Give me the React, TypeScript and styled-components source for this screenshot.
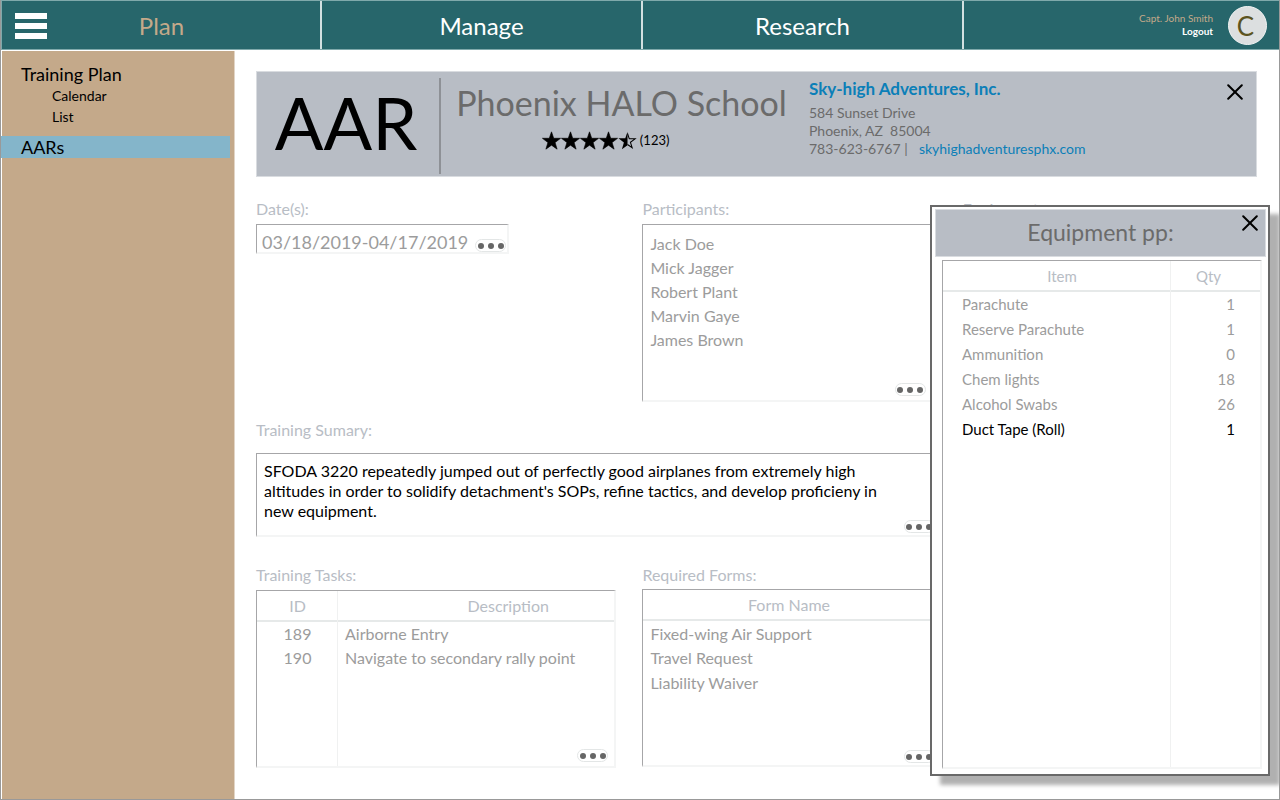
import React from "react";
import styled, { createGlobalStyle } from "styled-components";

const GlobalStyle = createGlobalStyle`
  *, *::before, *::after { box-sizing: border-box; }
  body { margin: 0; background: #fff; }
  body, button, input, textarea, table { font-family: Lato, "Liberation Sans", sans-serif; }
  button { border: 0; padding: 0; background: none; cursor: pointer; }
  a { color: inherit; text-decoration: none; }
  ul { list-style: none; margin: 0; padding: 0; }
  h1, h2, p { margin: 0; font-weight: 400; }
`;

const Page = styled.div`
  position: relative;
  display: flex;
  flex-direction: column;
  min-height: 100vh;
  overflow: hidden;
  border: 1px solid #999;
  border-top: 0;
`;

const Header = styled.header`
  display: grid;
  grid-template-columns: 320fr 321fr 321fr 315fr;
  height: 50px;
  border: 1px solid #7fa9ab;
  border-right: 0;
  background: #27666b;
`;

const NavCell = styled.div`
  display: flex;
  align-items: center;
  border-right: 2px solid #d3e0e1;
`;

const NavLink = styled.a<{ $active?: boolean }>`
  flex: 1;
  text-align: center;
  font-size: 24px;
  line-height: 32px;
  padding-top: 2px;
  color: ${(p) => (p.$active ? "#c4a98a" : "#fff")};
`;

const MenuButton = styled.button`
  display: flex;
  flex-direction: column;
  gap: 4px;
  width: 32px;
  margin: 2px -44px 0 13px;
`;

const MenuBar = styled.span`
  height: 6px;
  background: #fff;
`;

const Account = styled.div`
  display: flex;
  align-items: center;
  justify-content: flex-end;
  gap: 15px;
  padding-right: 12px;
`;

const AccountText = styled.div`
  display: flex;
  flex-direction: column;
  align-items: flex-end;
  font-size: 10px;
  line-height: 13px;
  color: #c4a98a;
`;

const Logout = styled.a`
  font-weight: 700;
  color: #fff;
`;

const Avatar = styled.div`
  width: 39px;
  height: 39px;
  border: 1px solid #f2f4f4;
  border-radius: 50%;
  background: #dcdfe0;
  color: #5c5420;
  font-size: 26px;
  line-height: 38px;
  padding-right: 4px;
  text-align: center;
`;

const Body = styled.div`
  display: flex;
  flex: 1;
`;

const Sidebar = styled.nav`
  width: 234px;
  flex-shrink: 0;
  margin-top: 1px;
  padding-top: 12px;
  border-left: 1px solid #fff;
  border-right: 1px solid #e2d5c6;
  background: #c4a98a;
`;

const SideLink = styled.a<{ $sub?: boolean; $active?: boolean }>`
  display: block;
  margin: ${(p) => (p.$active ? "9px 4px 0 -2px" : "0")};
  padding-left: ${(p) => (p.$sub ? 50 : p.$active ? 21 : 19)}px;
  font-size: ${(p) => (p.$sub ? 14 : 18)}px;
  line-height: ${(p) => (p.$sub ? 21 : 22)}px;
  background: ${(p) => (p.$active ? "#84b5ca" : "none")};
  color: #000;
`;

const Main = styled.main`
  flex: 1;
  min-width: 0;
  padding: 21px 22px 31px 21px;
`;

const Banner = styled.header`
  display: flex;
  height: 106px;
  margin-bottom: 22px;
  border: 1px solid #d9dce0;
  background: #b8bdc5;
`;

const BannerCode = styled.h1`
  width: 184px;
  margin: 6px 0 2px;
  padding-right: 4px;
  border-right: 2px solid #8e9196;
  font-size: 72px;
  line-height: 88px;
  text-align: center;
`;

const School = styled.div`
  display: flex;
  flex-direction: column;
  align-items: center;
  width: 361px;
  padding-top: 8px;
`;

const SchoolName = styled.h2`
  font-size: 34px;
  line-height: 46px;
  color: #6b6b6b;
  white-space: nowrap;
`;

const Rating = styled.p`
  display: flex;
  align-items: center;
  height: 28px;
  margin-right: 32px;
  font-size: 13px;
`;

const Contact = styled.address`
  flex: 1;
  padding: 5px 0 0 7px;
  font-style: normal;
  font-size: 14px;
  line-height: 18px;
  color: #6b6b6b;
  white-space: pre;
`;

const CompanyLink = styled.a`
  display: block;
  margin-bottom: 3px;
  font-size: 17px;
  line-height: 24px;
  font-weight: 700;
  color: #0b7fb8;
`;

const SiteLink = styled.a`
  margin-left: 4px;
  color: #0b7fb8;
`;

const BannerClose = styled.button`
  align-self: flex-start;
  height: 16px;
  margin: 12px 13px 0 0;
`;

const Grid = styled.div`
  display: grid;
  grid-template-columns: 360fr 294fr 294fr;
  column-gap: 26px;
`;

const Section = styled.section`
  margin-bottom: 18px;
`;

const WideSection = styled.section`
  grid-column: 1 / span 2;
  margin-bottom: 28px;
`;

const LowerSection = styled.section<{ $column: number }>`
  grid-column: ${(p) => p.$column};
`;

const Label = styled.label<{ $gap?: number }>`
  display: block;
  margin-bottom: ${(p) => p.$gap ?? 5}px;
  font-size: 16px;
  line-height: 20px;
  color: #b8bdc5;
`;

const Box = styled.div<{ $height: number; $width?: string }>`
  position: relative;
  width: ${(p) => p.$width ?? "auto"};
  min-height: ${(p) => p.$height}px;
  border: 1px solid #a6a6a8;
  border-right: 2px solid #f4f5f5;
  border-bottom: 2px solid #f4f5f5;
  background: #fff;
`;

const DateInput = styled.input`
  display: block;
  width: 220px;
  height: 27px;
  border: 0;
  padding: 6px 0 0 5px;
  background: none;
  font-size: 18px;
  color: #9c9c9c;
`;

const SummaryText = styled.textarea`
  display: block;
  width: 100%;
  height: 76px;
  border: 0;
  padding: 7px 7px 0;
  resize: none;
  overflow: hidden;
  background: none;
  font-size: 16px;
  line-height: 20px;
  color: #000;
`;

const People = styled.ul`
  padding: 7px;
  font-size: 16px;
  line-height: 24px;
  color: #9c9c9c;
`;

const MoreButton = styled.button<{ $right: number; $bottom: number }>`
  position: absolute;
  right: ${(p) => p.$right}px;
  bottom: ${(p) => p.$bottom}px;
  display: flex;
  align-items: center;
  justify-content: center;
  gap: 4px;
  width: 31px;
  height: 13px;
  border: 1px solid #e3e6e6;
  border-radius: 7px;
  background: #fff;
`;

const Dot = styled.span`
  width: 6px;
  height: 6px;
  border-radius: 50%;
  background: #666;
`;

const Table = styled.table<{ $compact?: boolean }>`
  width: 100%;
  border-collapse: collapse;
  table-layout: fixed;
  font-size: ${(p) => (p.$compact ? 15 : 16)}px;
  color: #9c9c9c;
`;

const HeadCell = styled.th<{ $width?: number; $shift?: number }>`
  width: ${(p) => (p.$width ? `${p.$width}px` : "auto")};
  height: 30px;
  padding: 0 0 0 ${(p) => p.$shift ?? 0}px;
  border-bottom: 2px solid #e6e9e9;
  font-weight: 400;
  color: #b8bdc5;
`;

const Cell = styled.td<{ $align?: string; $pad?: number; $height?: number; $strong?: boolean }>`
  height: ${(p) => p.$height ?? 24}px;
  padding: 0 ${(p) => (p.$align === "right" ? p.$pad : 0)}px 0 ${(p) => (p.$align ? 0 : p.$pad)}px;
  text-align: ${(p) => p.$align ?? "left"};
  color: ${(p) => (p.$strong ? "#000" : "inherit")};
  white-space: nowrap;
`;

const ColumnRule = styled.div<{ $left: string }>`
  position: absolute;
  top: 0;
  bottom: 0;
  left: ${(p) => p.$left};
  width: 1px;
  background: #f0f1f1;
`;

const Dialog = styled.section`
  position: absolute;
  top: 205px;
  right: 9px;
  width: 340px;
  padding: 2px 2px 5px 3px;
  border: 2px solid #696969;
  background: #fff;
  box-shadow: 10px 9px 4px rgba(0, 0, 0, 0.31);
`;

const DialogHead = styled.header`
  position: relative;
  height: 48px;
  margin-bottom: 3px;
  border: 1px solid #d9dce0;
  background: #b8bdc5;
`;

const DialogTitle = styled.h2`
  font-size: 23px;
  line-height: 44px;
  text-align: center;
  color: #6b6b6b;
`;

const DialogClose = styled.button`
  position: absolute;
  top: 5px;
  right: 7px;
  height: 16px;
`;

const DialogBody = styled.div`
  padding: 0 4px 0 7px;
`;

const CloseIcon = () => (
  <svg width="16" height="16" viewBox="0 0 16 16" display="block" aria-hidden="true">
    <path d="M1.2 1.2 14.8 14.8M14.8 1.2 1.2 14.8" stroke="#000" strokeWidth="2" strokeLinecap="round" />
  </svg>
);

const STAR = "M9 .8 11.1 6.9H17.6L12.4 10.9 14.3 17.2 9 13.4 3.7 17.2 5.6 10.9 .4 6.9H6.9Z";

const Star = ({ half }: { half?: boolean }) => (
  <svg width="19" height="19" viewBox="0 0 18 18" aria-hidden="true">
    {half ? (
      <>
        <path d="M9 .8V13.4L3.7 17.2 5.6 10.9 .4 6.9H6.9Z" />
        <path d="M9 2.4 10.7 7.4H16.2L11.8 10.7 13.4 15.9 9 12.8" fill="none" stroke="#000" />
      </>
    ) : (
      <path d={STAR} stroke="#000" strokeWidth=".6" />
    )}
  </svg>
);

const More = ({ label, right, bottom }: { label: string; right: number; bottom: number }) => (
  <MoreButton aria-label={`Edit ${label}`} $right={right} $bottom={bottom}>
    <Dot />
    <Dot />
    <Dot />
  </MoreButton>
);

const participants = ["Jack Doe", "Mick Jagger", "Robert Plant", "Marvin Gaye", "James Brown"];
const tasks = [
  ["189", "Airborne Entry"],
  ["190", "Navigate to secondary rally point"],
];
const requiredForms = ["Fixed-wing Air Support", "Travel Request", "Liability Waiver"];
const equipment: [string, number][] = [
  ["Parachute", 1],
  ["Reserve Parachute", 1],
  ["Ammunition", 0],
  ["Chem lights", 18],
  ["Alcohol Swabs", 26],
  ["Duct Tape (Roll)", 1],
];
const summary =
  "SFODA 3220 repeatedly jumped out of perfectly good airplanes from extremely high\naltitudes in order to solidify detachment's SOPs, refine tactics, and develop proficieny in\nnew equipment.";

export default function App() {
  return (
    <Page>
      <GlobalStyle />
      <Header>
        <NavCell>
          <MenuButton aria-label="Menu">
            <MenuBar />
            <MenuBar />
            <MenuBar />
          </MenuButton>
          <NavLink href="#plan" $active>Plan</NavLink>
        </NavCell>
        <NavCell><NavLink href="#manage">Manage</NavLink></NavCell>
        <NavCell><NavLink href="#research">Research</NavLink></NavCell>
        <Account>
          <AccountText>
            <span>Capt. John Smith</span>
            <Logout href="#logout">Logout</Logout>
          </AccountText>
          <Avatar>C</Avatar>
        </Account>
      </Header>
      <Body>
        <Sidebar>
          <SideLink href="#training-plan">Training Plan</SideLink>
          <SideLink href="#calendar" $sub>Calendar</SideLink>
          <SideLink href="#list" $sub>List</SideLink>
          <SideLink href="#aars" $active>AARs</SideLink>
        </Sidebar>
        <Main>
          <Banner>
            <BannerCode>AAR</BannerCode>
            <School>
              <SchoolName>Phoenix HALO School</SchoolName>
              <Rating>
                <Star /><Star /><Star /><Star /><Star half />
                <span>&nbsp;(123)</span>
              </Rating>
            </School>
            <Contact>
              <CompanyLink href="#company">Sky-high Adventures, Inc.</CompanyLink>
              <div>584 Sunset Drive</div>
              <div>{"Phoenix, AZ  85004"}</div>
              <div>{"783-623-6767 |  "}<SiteLink href="#site">skyhighadventuresphx.com</SiteLink></div>
            </Contact>
            <BannerClose aria-label="Close report"><CloseIcon /></BannerClose>
          </Banner>
          <Grid>
            <Section>
              <Label htmlFor="dates">Date(s):</Label>
              <Box $height={30} $width="253px">
                <DateInput id="dates" defaultValue="03/18/2019-04/17/2019" />
                <More label="dates" right={1} bottom={0} />
              </Box>
            </Section>
            <Section>
              <Label as="h2">Participants:</Label>
              <Box $height={178}>
                <People>
                  {participants.map((name) => <li key={name}>{name}</li>)}
                </People>
                <More label="participants" right={9} bottom={4} />
              </Box>
            </Section>
            <Section>
              <Label as="h2">Equipment:</Label>
            </Section>
            <WideSection>
              <Label htmlFor="summary" $gap={13}>Training Sumary:</Label>
              <Box $height={84}>
                <SummaryText id="summary" defaultValue={summary} />
                <More label="summary" right={0} bottom={2} />
              </Box>
            </WideSection>
            <LowerSection $column={1}>
              <Label as="h2">Training Tasks:</Label>
              <Box $height={178}>
                <Table>
                  <thead>
                    <tr>
                      <HeadCell $width={81}>ID</HeadCell>
                      <HeadCell $shift={64}>Description</HeadCell>
                    </tr>
                  </thead>
                  <tbody>
                    {tasks.map(([id, text]) => (
                      <tr key={id}>
                        <Cell $align="center">{id}</Cell>
                        <Cell $pad={7}>{text}</Cell>
                      </tr>
                    ))}
                  </tbody>
                </Table>
                <ColumnRule $left="80px" />
                <More label="training tasks" right={6} bottom={4} />
              </Box>
            </LowerSection>
            <LowerSection $column={2}>
              <Label as="h2" $gap={4}>Required Forms:</Label>
              <Box $height={178}>
                <Table>
                  <thead>
                    <tr><HeadCell>Form Name</HeadCell></tr>
                  </thead>
                  <tbody>
                    {requiredForms.map((name) => (
                      <tr key={name}><Cell $pad={7} $height={25}>{name}</Cell></tr>
                    ))}
                  </tbody>
                </Table>
                <More label="required forms" right={0} bottom={2} />
              </Box>
            </LowerSection>
          </Grid>
        </Main>
      </Body>
      <Dialog role="dialog" aria-labelledby="equipment-title">
        <DialogHead>
          <DialogTitle id="equipment-title">Equipment pp:</DialogTitle>
          <DialogClose aria-label="Close equipment"><CloseIcon /></DialogClose>
        </DialogHead>
        <DialogBody>
          <Box $height={509}>
            <Table $compact>
              <thead>
                <tr>
                  <HeadCell $shift={24}>Item</HeadCell>
                  <HeadCell $width={103}>Qty</HeadCell>
                </tr>
              </thead>
              <tbody>
                {equipment.map(([item, qty]) => (
                  <tr key={item}>
                    <Cell $pad={19} $height={25} $strong={item === "Duct Tape (Roll)"}>{item}</Cell>
                    <Cell $align="right" $pad={25} $height={25} $strong={item === "Duct Tape (Roll)"}>{qty}</Cell>
                  </tr>
                ))}
              </tbody>
            </Table>
            <ColumnRule $left="227px" />
          </Box>
        </DialogBody>
      </Dialog>
    </Page>
  );
}
